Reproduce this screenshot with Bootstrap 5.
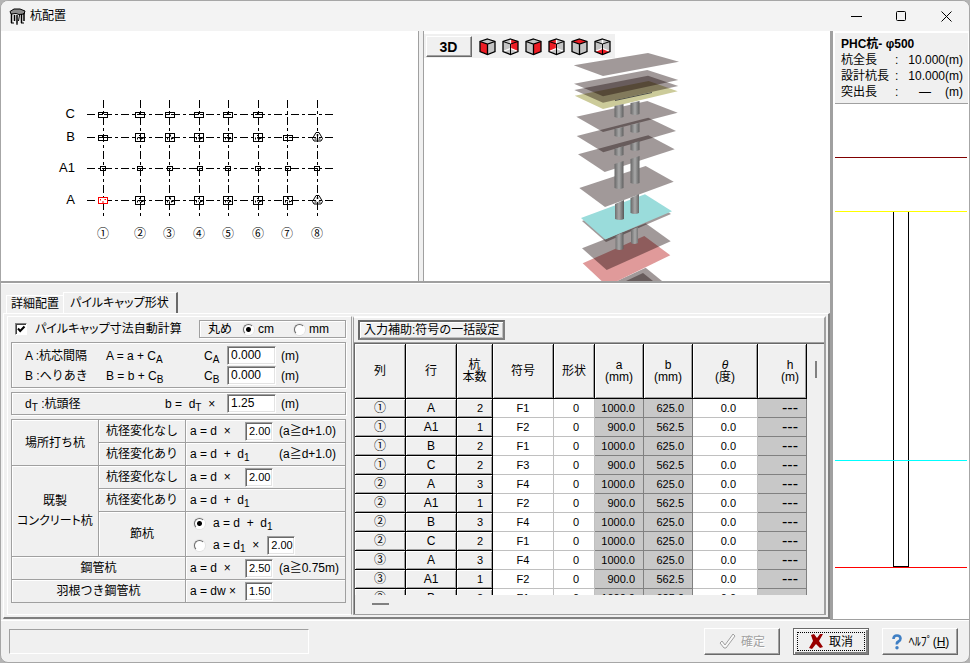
<!DOCTYPE html>
<html lang="ja">
<head>
<meta charset="utf-8">
<meta name="viewport" content="width=device-width, initial-scale=1">
<title>杭配置</title>
<link href="https://cdn.jsdelivr.net/npm/bootstrap@5.3.0/dist/css/bootstrap.min.css" rel="stylesheet">
<style>
body{font-family:"Liberation Sans","Noto Sans CJK JP",sans-serif;font-size:12px;line-height:16px;color:#000;background:#b4b4b4}
.win{height:100vh;min-height:640px;background:#f0f0f0;border:1px solid #a6a6a6;border-radius:8px;overflow:hidden}
.titlebar{height:30px;background:#f3f3f3;padding-left:8px}
.titlebar h1{font-size:12px;line-height:16px}
.winbtn{width:45px;height:28px;border:0;background:none;padding:0;display:flex;align-items:center;justify-content:center}
.palt{font-feature-settings:"palt"}
.body-row,.pane,.scroller{min-height:0}
.views{border-bottom:2px solid #a0a0a0;flex:none}
.view-a{flex:417 1 0;min-width:0;background:#fff;border-right:1px solid #a0a0a0}
.view-b{flex:407 1 0;min-width:0;background:#fff;margin-left:4px;border-left:1px solid #a0a0a0;position:relative}
svg{display:block;flex:none}
.tools{position:absolute;left:0;top:3px;background:#f0f0f0;padding:2px 1px 1px 2px}
.btn3{border:1px solid;border-color:#fff #696969 #696969 #fff;box-shadow:inset -1px -1px 0 #a0a0a0;background:#f0f0f0;color:#000;border-radius:0;padding:0;font-size:12px;line-height:16px}
.btn-3d{width:46px;height:21px;font-size:14px;font-weight:bold}
.cube{border:0;background:none;padding:0;width:23px}
.leftcol{flex:1 1 0;min-width:0}
.side{width:139px;flex:none;border-left:3px solid #a0a0a0;border-bottom:1px solid #a0a0a0;padding:2px 1px 0 2px;background:#fff;overflow:hidden}
.side-info{background:#f0f0f0;padding:3px 5px 3px 6px;border-bottom:1px solid #a0a0a0}
.side-info dl{display:grid;grid-template-columns:54px 1fr 56px;margin:0}
.side-info dt{font-weight:normal}
.side-info dd{margin:0;text-align:right}
.side-info dd.sep{text-align:left}
.tabs{padding:8px 0 0 5px;border-top:1px solid #fff;margin-right:1px;flex:none}
.tabx{border:1px solid;border-color:#fff #a0a0a0 transparent #fff;border-bottom:0;background:#f0f0f0;padding:0 4px;height:18px;line-height:17px;border-radius:0;color:#000;font-size:12px;border-right:0}
.tabx.active{height:21px;border-right:2px solid #696969;line-height:18px;padding:0 7px 0 6px}
.pane{border-top:1px solid #fff;border-left:1px solid #fff;border-right:2px solid #808080;border-bottom:2px solid #808080;margin-left:2px;margin-bottom:1px;padding:2px 2px 2px 3px}
.formside{width:345px;flex:none;border:1px solid #fff;border-right-color:#a0a0a0;padding:3px 5px 0 3px}
.grp{border:1px solid #a0a0a0;box-shadow:1px 1px 0 #fff,inset 1px 1px 0 #fff}
.round{width:147px}
.ab{display:grid;grid-template-columns:81px 98px 23px 49px 1fr;padding:3px 0 2px 13px;align-items:center;row-gap:1px}
.dt{display:grid;grid-template-columns:140px 62px 49px 1fr;padding:1px 0 1px 13px;align-items:center}
.fx{font-size:12px;white-space:pre}
sub{font-size:10px;bottom:-3px;line-height:0}
.unit{padding-left:5px}
.num{height:19px;border:1px solid;border-color:#a0a0a0 #fff #fff #a0a0a0;box-shadow:inset 1px 1px 0 #696969,inset -1px -1px 0 #e3e3e3;background:#fff;border-radius:0;padding:0 0 1px 3px;font-size:12px;line-height:15px;min-height:0;color:#000;width:49px}
.num.sm{width:28px;padding-left:3px;font-size:11px}
.tick{appearance:none;width:12px;height:12px;margin:0;border:1px solid;border-color:#808080 #fff #fff #808080;box-shadow:inset 1px 1px 0 #404040;background:#fff}
.tick:checked{background:#fff url("data:image/svg+xml,%3Csvg xmlns='http://www.w3.org/2000/svg' viewBox='0 0 10 10'%3E%3Cpath d='M2 4.5l2.200 2.500L8.500 2.500' fill='none' stroke='%23000' stroke-width='2'/%3E%3C/svg%3E") center/10px no-repeat}
.rad{appearance:none;width:11px;height:11px;margin:0;border:1px solid;border-color:#696969 #fff #fff #696969;border-radius:50%;background:#fff;box-shadow:0 0 0 1px #e3e3e3;flex:none}
.rad:checked{background:radial-gradient(circle,#000 0 2px,#fff 3px)}
.ftab{width:100%;border-collapse:collapse;table-layout:fixed}
.ftab th,.ftab td{border:1px solid #a0a0a0;box-shadow:inset 1px 1px 0 #fff;height:23px;padding:0;vertical-align:middle}
.ftab th{font-weight:normal;text-align:center}
.ftab td{padding-left:4px}
.fl{width:55px}
.fw{width:83px}
.note{padding-left:6px}
.opt{height:22px}
.gridside{flex:1 1 0;min-width:0;border:2px solid #fff;border-left:1px solid #a0a0a0;border-right-color:#a0a0a0;margin-left:1px;border-bottom:1px solid #a0a0a0}
.gbar{padding:2px 0 2px 4px;border-bottom:1px solid #a0a0a0}
.btn-in{height:20px;padding:0 4px;border:2px solid #808080;border-left-color:#696969;border-top-color:#696969;box-shadow:inset 1px 1px 0 #fff,inset -1px -1px 0 #c0c0c0}
.scroller{border-top:1px solid #696969;border-left:1px solid #696969;display:grid;grid-template-columns:minmax(0,1fr) 17px;grid-template-rows:minmax(0,1fr) 19px}
.clip{overflow:hidden;background:#f0f0f0}
.piles{width:100%;table-layout:fixed;border-collapse:separate;border-spacing:0}
.piles th,.piles td{padding:0;height:19px;line-height:16px;border:solid #c0c0c0;border-width:0 1px 1px 0;background:#fff;vertical-align:middle;font-size:11px;overflow:hidden;font-weight:normal}
.piles thead th,.piles tbody th{background:#f0f0f0;border-color:#000;text-align:center;box-shadow:inset 1px 1px 0 #fff,inset -1px -1px 0 #a0a0a0;font-size:12px}
.piles thead th{height:55px;line-height:12px}
.piles tbody th.n{text-align:right;padding-right:9px;font-size:11px}
.piles td{text-align:right}
.piles td:nth-child(4){text-align:center}
.piles td:nth-child(5){padding-right:15px}
.piles td:nth-child(6),.piles td:nth-child(7),.piles td:nth-child(9){background:#c8c8c8;border-color:#808080;padding-right:8px}
.piles td:nth-child(8){padding-right:21px}
.piles td:nth-child(9){font-size:16px}
.thumb-v{width:2px;height:17px;background:#808080;margin:17px 0 0 8px}
.thumb-h{width:17px;height:2px;background:#808080;margin:8px 0 0 17px}
.foot{height:42px;flex:none;border-top:1px solid #fff;padding:0 11px 0 8px}
.status{width:300px;height:25px;border:1px solid;border-color:#a0a0a0 #fff #fff #a0a0a0}
.cmds{gap:13px}
.cmd{width:76px;height:27px;display:flex;align-items:center;justify-content:center;gap:5px}
.cmd:disabled{color:#a0a0a0;text-shadow:1px 1px 0 #fff}
.cmd.main{border-color:#696969;box-shadow:inset 1px 1px 0 #fff,inset -2px -2px 0 #808080;outline:1px dotted #000;outline-offset:-5px}
</style>
</head>
<body>
<div class="win d-flex flex-column">
<header class="titlebar d-flex align-items-center flex-shrink-0">
  <svg width="17" height="17" viewBox="0 0 17 17" aria-hidden="true"><path d="M1 3.500L5 1h6l5 2-1 3-5 .5-3-1-5 .5z" fill="#8c8c8c" stroke="#000" stroke-width="1"/><path d="M2.500 6v9M5.500 7v6M8 7v8.500M12.500 6v9M15 5v8" stroke="#000" stroke-width="1.500"/><path d="M10.500 7l-1 6" stroke="#000"/><path d="M2 15h3M7 16h2M12 15h3" stroke="#000" fill="none"/></svg>
  <h1 class="m-0 ps-1 fw-normal flex-fill">杭配置</h1>
  <button class="winbtn" aria-label="最小化"><svg width="11" height="11"><path d="M0 5.500h11" stroke="#000"/></svg></button>
  <button class="winbtn" aria-label="最大化"><svg width="11" height="11"><rect x=".5" y=".5" width="9" height="9" rx="1" fill="none" stroke="#000"/></svg></button>
  <button class="winbtn" aria-label="閉じる"><svg width="11" height="11"><path d="M.5.500l10 10M10.500.500l-10 10" stroke="#000"/></svg></button>
</header>
<main class="body-row d-flex flex-fill">
<div class="leftcol d-flex flex-column">
  <section class="views d-flex">
    <div class="view-a overflow-hidden">
      <svg width="416" height="250" viewBox="1 31 416 250" role="img" aria-label="杭配置図">
        <defs>
          <g id="cap2" fill="none" stroke="#000"><rect x="-4.500" y="-2.500" width="9" height="5"/><path d="M-3 -.5h2M1 -.5h2M-.5 -2v2"/></g>
          <g id="cap3" fill="none" stroke="#000"><rect x="-4.500" y="-4" width="9" height="8"/><path d="M-1 -2h2M.5 -3v2M-2.500 2v-2M-1 .500h1M1.500 1h2M1.500 0v2"/></g>
          <g id="cap1" fill="none" stroke="#000"><rect x="-2.500" y="-2" width="5" height="4"/><path d="M-1 0h2"/></g>
          <g id="cap8" fill="none" stroke="#000"><path d="M-1.500 -4.500h3l3.500 6-1.500 2.500h-7l-1.500-2.500z"/><path d="M-1 -2h2M-3 2h2M1 2h2"/></g>
        </defs>
        <g stroke="#000" fill="none" stroke-dasharray="8 3 3 3">
          <path d="M87 114.500H333M87 137.500H333M87 168.500H333M87 200.500H333"/>
          <path d="M103.500 100V216M140.500 100V216M169.500 100V216M199.500 100V216M228.500 100V216M258.500 100V216M287.500 100V216M317.500 100V216"/>
        </g>
        <use href="#cap2" x="103" y="115"/><use href="#cap2" x="140" y="115"/><use href="#cap2" x="170" y="115"/><use href="#cap2" x="199" y="115"/><use href="#cap2" x="228" y="115"/><use href="#cap2" x="258" y="115"/>
        <use href="#cap2" x="103" y="138"/><use href="#cap3" x="140" y="137.500"/><use href="#cap3" x="170" y="137.500"/><use href="#cap3" x="199" y="137.500"/><use href="#cap3" x="228" y="137.500"/><use href="#cap3" x="258" y="137.500"/><use href="#cap2" x="288" y="138"/><use href="#cap8" x="317.500" y="137"/>
        <use href="#cap1" x="103" y="168.500"/><use href="#cap1" x="140" y="168.500"/><use href="#cap1" x="170" y="168.500"/><use href="#cap1" x="200" y="168.500"/><use href="#cap1" x="228" y="168.500"/><use href="#cap1" x="258" y="168.500"/><use href="#cap1" x="288" y="168.500"/><use href="#cap1" x="317" y="168.500"/>
        <g fill="#fff" stroke="#f00"><rect x="98.500" y="197.500" width="9" height="6"/><path d="M100.500 199v1.500M104.500 199.500h1.500M102 202h2"/></g>
        <use href="#cap3" x="140" y="200.500"/><use href="#cap3" x="170" y="200.500"/><use href="#cap3" x="199" y="200.500"/><use href="#cap3" x="228" y="200.500"/><use href="#cap3" x="258" y="200.500"/><use href="#cap3" x="288" y="200.500"/><use href="#cap8" x="317.500" y="200"/>
        <g font-size="13" text-anchor="end"><text x="75" y="118">C</text><text x="75" y="141">B</text><text x="75" y="172">A1</text><text x="75" y="204">A</text></g>
        <g font-size="12" text-anchor="middle"><text x="103" y="238">①</text><text x="140" y="238">②</text><text x="169" y="238">③</text><text x="199" y="238">④</text><text x="228" y="238">⑤</text><text x="258" y="238">⑥</text><text x="287" y="238">⑦</text><text x="317" y="238">⑧</text></g>
      </svg>
    </div>
    <div class="view-b overflow-hidden">
      <svg width="406" height="250" viewBox="424 31 406 250" role="img" aria-label="3D表示">
        <defs><linearGradient id="pile" gradientUnits="userSpaceOnUse" x1="614.500" y1="0" x2="630.500" y2="0" spreadMethod="repeat"><stop offset="0" stop-color="#666"/><stop offset=".28" stop-color="#a8a8a8"/><stop offset=".56" stop-color="#606060"/><stop offset="1" stop-color="#606060"/></linearGradient></defs>
        <g fill="#150000" fill-opacity=".4">
          <path d="M617 281L645.700 267.700 662 281z"/><path d="M626 281L643 273 653 281z"/>
          <path d="M582.700 263.300L644.300 236 670.300 255.300 607 286z" fill="#e09a9a" fill-opacity="1"/>
          <path d="M582 248.300L645.700 223.300 670.700 241.300 606.700 270z"/>
          <path d="M582 221L645 197 671 214 606 242z"/>
          <path d="M581 218L645 194.300 672 211.300 605.300 239.500z" fill="#9adcdb" fill-opacity="1"/>
          <path d="M579.300 188L645.700 166 673.700 181.700 605 207z"/>
          <path d="M578 154.300L648.300 135.300 674.700 149.300 604.700 172z"/>
          <path d="M576.700 136L648.300 117.700 676 131 603.300 152.300z"/>
          <path d="M576.300 116.700L647.300 101 677.700 112.700 603 132z"/>
          <path d="M574.700 95.700L648.700 81 677.700 91.300 603 109z" fill="#cccb9a" fill-opacity="1"/>
          <path d="M574.300 90L648 75.700 678.300 86 603 102.700z"/>
          <path d="M574 83.700L647.300 70 678.300 80 603 96.300z"/>
          <path d="M573.700 65.300L648 53 679 61.700 603 76z"/>
        </g>
        <path d="M615 100.500L652 92.500" stroke="#50504a" stroke-width="1"/>
        <g fill="url(#pile)">
          <path d="M614.500 106l9-2v13q-4 2-9 0zM630.500 103l9-2v13q-4 2-9 0z"/>
          <path d="M614.500 129l9-2v9q-4 2-9 0zM630.500 125l9-2v9q-4 2-9 0z"/>
          <path d="M614.500 149l9-3v9q-4 2-9 0zM630.500 144l9-3v9q-4 2-9 0z"/>
          <path d="M614.500 164l9-3v27q-4 2-9 0zM630.500 159l9-3v27q-4 2-9 0z"/>
          <path d="M615 204l9-4v19q-4 2-9 0zM630.500 198l8.500-4v19q-4 2-8.500 0z"/>
          <path d="M615.500 236l8-4v17q-4 2-8 0zM631 230l7-3v16q-4 2-7 0z"/>
        </g>
      </svg>
      <div class="tools d-flex align-items-center">
        <button class="btn3 btn-3d me-1">3D</button>
        <svg width="0" height="0" class="position-absolute"><defs>
          <g id="solid"><path d="M8.500 1L16 3.500v10L8.500 16.500 1 13.500v-10z" fill="#c4c4c4"/></g>
          <g id="edge" fill="none" stroke="#000" stroke-width="1.300"><path d="M8.500 1L16 3.500v10L8.500 16.500 1 13.500v-10z"/></g>
          <path id="front" d="M1 3.500L8.500 6 16 3.500M8.500 6v10.500" fill="none" stroke="#000" stroke-width="1.300"/>
          <path id="back" d="M1 13.500L8.500 10.500 16 13.500M8.500 10.500V1" fill="none" stroke="#fff" stroke-width="1.300"/>
          <path id="thin" d="M1 3.500L8.500 6 16 3.500M8.500 6v10" fill="none" stroke="#000" stroke-width="1"/>
        </defs></svg>
        <button class="cube" aria-label="前面"><svg class="mx-auto" width="17" height="18"><use href="#solid"/><path d="M1 3.500L8.500 6v10.500L1 13.500z" fill="#ed1c24"/><use href="#front"/><use href="#edge"/></svg></button>
        <button class="cube" aria-label="背面"><svg class="mx-auto" width="17" height="18"><use href="#solid"/><path d="M8.500 1L16 3.500v10L8.500 10.500z" fill="#ed1c24"/><use href="#back"/><use href="#thin"/><use href="#edge"/></svg></button>
        <button class="cube" aria-label="右面"><svg class="mx-auto" width="17" height="18"><use href="#solid"/><path d="M16 3.500L8.500 6v10.500l7.500-3z" fill="#ed1c24"/><use href="#front"/><use href="#edge"/></svg></button>
        <button class="cube" aria-label="左面"><svg class="mx-auto" width="17" height="18"><use href="#solid"/><path d="M8.500 1L1 3.500v10l7.500-3z" fill="#ed1c24"/><use href="#back"/><use href="#thin"/><use href="#edge"/></svg></button>
        <button class="cube" aria-label="上面"><svg class="mx-auto" width="17" height="18"><use href="#solid"/><path d="M8.500 1L16 3.500 8.500 6 1 3.500z" fill="#ed1c24"/><use href="#front"/><use href="#edge"/></svg></button>
        <button class="cube" aria-label="下面"><svg class="mx-auto" width="17" height="18"><use href="#solid"/><path d="M8.500 10.500L16 13.500l-7.500 3-7.500-3z" fill="#ed1c24"/><use href="#back"/><use href="#thin"/><use href="#edge"/></svg></button>
      </div>
    </div>
  </section>
  <div class="tabs d-flex align-items-end" role="tablist">
    <button class="tabx" role="tab" aria-selected="false">詳細配置</button>
    <button class="tabx active palt" role="tab" aria-selected="true">パイルキャップ形状</button>
  </div>
  <section class="pane d-flex flex-fill" role="tabpanel">
    <form class="formside">
      <div class="d-flex align-items-center justify-content-between mb-1">
        <div class="d-flex align-items-center ps-1"><input type="checkbox" class="tick" id="auto" checked><label for="auto" class="ps-2 palt">パイルキャップ寸法自動計算</label></div>
        <div class="grp round d-flex align-items-center px-2">
          <span class="flex-fill">丸め</span>
          <input type="radio" class="rad" name="rnd" id="cm" checked><label for="cm" class="ps-1 pe-3 me-1">cm</label>
          <input type="radio" class="rad" name="rnd" id="mm"><label for="mm" class="ps-1 pe-2">mm</label>
        </div>
      </div>
      <div class="grp ab mb-1">
        <span>A :杭芯間隔</span><span class="fx">A = a + C<sub>A</sub></span><label for="ca">C<sub>A</sub></label><input class="num" id="ca" value="0.000"><span class="unit">(m)</span>
        <span>B :へりあき</span><span class="fx">B = b + C<sub>B</sub></span><label for="cb">C<sub>B</sub></label><input class="num" id="cb" value="0.000"><span class="unit">(m)</span>
      </div>
      <div class="grp dt mb-1">
        <span>d<sub>T</sub> :杭頭径</span><label for="dt" class="fx">b =  d<sub>T</sub>  ×</label><input class="num" id="dt" value="1.25"><span class="unit">(m)</span>
      </div>
      <table class="ftab mt-1 mb-0">
        <colgroup><col style="width:87px"><col style="width:87px"><col></colgroup>
        <tr><th rowspan="2">場所打ち杭</th><th>杭径変化なし</th><td><div class="d-flex align-items-center"><label for="f1" class="fx fl">a = d  ×</label><input class="num sm" id="f1" value="2.00"><span class="note">(a≧d+1.0)</span></div></td></tr>
        <tr><th>杭径変化あり</th><td><div class="d-flex align-items-center"><span class="fx fw">a = d  +  d<sub>1</sub></span><span class="note">(a≧d+1.0)</span></div></td></tr>
        <tr><th rowspan="3"><div class="mb-1">既製</div><div class="palt">コンクリート杭</div></th><th>杭径変化なし</th><td><div class="d-flex align-items-center"><label for="f2" class="fx fl">a = d  ×</label><input class="num sm" id="f2" value="2.00"></div></td></tr>
        <tr><th>杭径変化あり</th><td><span class="fx">a = d  +  d<sub>1</sub></span></td></tr>
        <tr><th>節杭</th><td class="ps-2"><div class="opt d-flex align-items-center"><input type="radio" class="rad" name="fushi" id="r1" checked><label for="r1" class="fx ps-2">a = d  +  d<sub>1</sub></label></div>
          <div class="opt d-flex align-items-center"><input type="radio" class="rad" name="fushi" id="r2"><label for="r2" class="fx ps-2 pe-2">a = d<sub>1</sub>  ×</label><input class="num sm" aria-label="d1倍率" value="2.00"></div></td></tr>
        <tr><th colspan="2">鋼管杭</th><td><div class="d-flex align-items-center"><label for="f3" class="fx fl">a = d  ×</label><input class="num sm" id="f3" value="2.50"><span class="note">(a≧0.75m)</span></div></td></tr>
        <tr><th colspan="2">羽根つき鋼管杭</th><td><div class="d-flex align-items-center"><label for="f4" class="fx fl">a = dw ×</label><input class="num sm" id="f4" value="1.50"></div></td></tr>
      </table>
    </form>
    <div class="gridside d-flex flex-column">
      <div class="gbar"><button class="btn3 btn-in d-block">入力補助:符号の一括設定</button></div>
      <div class="scroller flex-fill">
        <div class="clip">
        <table class="piles">
          <colgroup><col style="width:51px"><col style="width:51px"><col style="width:36px"><col style="width:61px"><col style="width:41px"><col style="width:49px"><col style="width:49px"><col style="width:65px"><col></colgroup>
          <thead><tr><th>列</th><th>行</th><th>杭<br>本数</th><th>符号</th><th>形状</th><th>a<br>(mm)</th><th>b<br>(mm)</th><th><i>θ</i><br>(度)</th><th class="ps-3">h<br>(m)</th></tr></thead>
          <tbody>
          <tr><th>①</th><th>A</th><th class="n">2</th><td>F1</td><td>0</td><td>1000.0</td><td>625.0</td><td>0.0</td><td>---</td></tr>
          <tr><th>①</th><th>A1</th><th class="n">1</th><td>F2</td><td>0</td><td>900.0</td><td>562.5</td><td>0.0</td><td>---</td></tr>
          <tr><th>①</th><th>B</th><th class="n">2</th><td>F1</td><td>0</td><td>1000.0</td><td>625.0</td><td>0.0</td><td>---</td></tr>
          <tr><th>①</th><th>C</th><th class="n">2</th><td>F3</td><td>0</td><td>900.0</td><td>562.5</td><td>0.0</td><td>---</td></tr>
          <tr><th>②</th><th>A</th><th class="n">3</th><td>F4</td><td>0</td><td>1000.0</td><td>625.0</td><td>0.0</td><td>---</td></tr>
          <tr><th>②</th><th>A1</th><th class="n">1</th><td>F2</td><td>0</td><td>900.0</td><td>562.5</td><td>0.0</td><td>---</td></tr>
          <tr><th>②</th><th>B</th><th class="n">3</th><td>F4</td><td>0</td><td>1000.0</td><td>625.0</td><td>0.0</td><td>---</td></tr>
          <tr><th>②</th><th>C</th><th class="n">2</th><td>F1</td><td>0</td><td>1000.0</td><td>625.0</td><td>0.0</td><td>---</td></tr>
          <tr><th>③</th><th>A</th><th class="n">3</th><td>F4</td><td>0</td><td>1000.0</td><td>625.0</td><td>0.0</td><td>---</td></tr>
          <tr><th>③</th><th>A1</th><th class="n">1</th><td>F2</td><td>0</td><td>900.0</td><td>562.5</td><td>0.0</td><td>---</td></tr>
          <tr><th>③</th><th>B</th><th class="n">2</th><td>F1</td><td>0</td><td>1000.0</td><td>625.0</td><td>0.0</td><td>---</td></tr>
          </tbody>
        </table>
        </div>
        <div><div class="thumb-v"></div></div>
        <div><div class="thumb-h"></div></div>
      </div>
    </div>
  </section>
</div>
<aside class="side d-flex flex-column">
  <div class="side-info">
    <strong class="d-block">PHC杭- φ500</strong>
    <dl>
      <dt>杭全長</dt><dd class="sep">:</dd><dd>10.000(m)</dd>
      <dt>設計杭長</dt><dd class="sep">:</dd><dd>10.000(m)</dd>
      <dt>突出長</dt><dd class="sep">:</dd><dd class="d-flex justify-content-between"><span class="ps-2 ms-1">―</span><span>(m)</span></dd>
    </dl>
  </div>
  <svg width="133" height="515" viewBox="835 104 133 515" role="img" aria-label="杭姿図" shape-rendering="crispEdges">
    <path d="M835 157.500H967" stroke="#800000"/>
    <path d="M835 211.500H967" stroke="#ff0"/>
    <path d="M893.500 212V566.500H908.500V212" fill="none" stroke="#000"/>
    <path d="M835 460.500H967" stroke="#0ff"/>
    <path d="M835 567.500H967" stroke="#f00"/>
  </svg>
</aside>
</main>
<footer class="foot d-flex align-items-center">
  <div class="status"></div>
  <div class="cmds d-flex ms-auto">
    <button class="btn3 cmd" disabled><svg width="17" height="17" viewBox="0 0 17 17"><path d="M1 10l2-2 3 4L14 1l2 2L7 15H5z" fill="#f8f8f8" stroke="#a0a0a0"/></svg>確定</button>
    <button class="btn3 cmd main"><svg width="15" height="15" viewBox="0 0 15 15"><path d="M2 1l3-1 3 4 3-4h3l-4 7 4 6-3 1-4-4-4 5-3-1 4-7z" fill="#900"/></svg>取消</button>
    <button class="btn3 cmd"><svg width="13" height="16" viewBox="0 0 13 16" aria-hidden="true"><path d="M2.500 5Q2.500 1.500 6 1.500T9.500 4.500Q9.500 6.500 7.500 7.500T6 10.500" fill="none" stroke="#3f7fc4" stroke-width="2.600"/><circle cx="6" cy="13.800" r="1.700" fill="#3f7fc4"/></svg><span>ﾍﾙﾌﾟ(<u>H</u>)</span></button>
  </div>
</footer>
</div>
<script src="https://cdn.jsdelivr.net/npm/bootstrap@5.3.0/dist/js/bootstrap.bundle.min.js"></script>
</body>
</html>
